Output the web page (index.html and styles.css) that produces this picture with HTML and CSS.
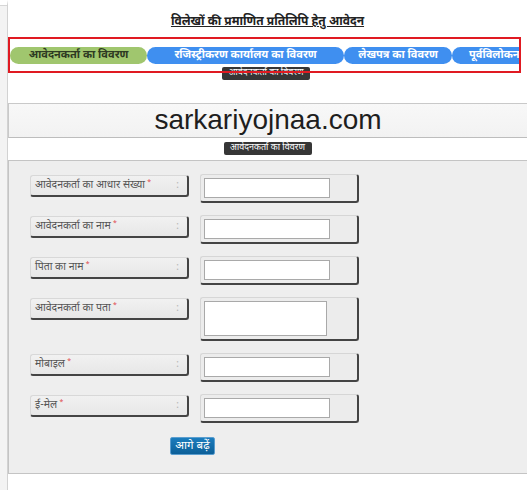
FILE: index.html
```html
<!DOCTYPE html>
<html lang="hi">
<head>
<meta charset="utf-8">
<title>विलेखों की प्रमाणित प्रतिलिपि हेतु आवेदन</title>
<link rel="stylesheet" href="styles.css">
</head>
<body>
<div class="page">
  <div class="gutter"></div>
  <main class="main">
    <h1 class="title">विलेखों की प्रमाणित प्रतिलिपि हेतु आवेदन</h1>
    <div class="steps">
      <div class="tabs">
        <span class="tab tab-active">आवेदनकर्ता का विवरण</span>
        <span class="tab tab-office">रजिस्ट्रीकरण कार्यालय का विवरण</span>
        <span class="tab tab-deed">लेखपत्र का विवरण</span>
        <span class="tab tab-preview">पूर्वविलोकन</span>
      </div>
      <span class="badge badge-tip">आवेदनकर्ता का विवरण</span>
    </div>
    <div class="banner">sarkariyojnaa.com</div>
    <div class="caption"><span class="badge">आवेदनकर्ता का विवरण</span></div>
    <form class="panel">
      <div class="row">
        <label class="label"><span>आवेदनकर्ता का आधार संख्या<sup>*</sup></span><span class="colon">:</span></label>
        <div class="field"><input class="input" type="text"></div>
      </div>
      <div class="row">
        <label class="label"><span>आवेदनकर्ता का नाम<sup>*</sup></span><span class="colon">:</span></label>
        <div class="field"><input class="input" type="text"></div>
      </div>
      <div class="row">
        <label class="label"><span>पिता का नाम<sup>*</sup></span><span class="colon">:</span></label>
        <div class="field"><input class="input" type="text"></div>
      </div>
      <div class="row">
        <label class="label"><span>आवेदनकर्ता का पता<sup>*</sup></span><span class="colon">:</span></label>
        <div class="field"><textarea class="input area"></textarea></div>
      </div>
      <div class="row">
        <label class="label"><span>मोबाइल<sup>*</sup></span><span class="colon">:</span></label>
        <div class="field"><input class="input" type="text"></div>
      </div>
      <div class="row">
        <label class="label"><span>ई-मेल<sup>*</sup></span><span class="colon">:</span></label>
        <div class="field"><input class="input" type="text"></div>
      </div>
      <div class="actions"><button class="btn" type="button">आगे बढ़ें</button></div>
    </form>
  </main>
</div>
</body>
</html>
```
FILE: styles.css
```css
* { box-sizing: border-box; }
html, body { margin: 0; padding: 0; background: #fff; }
body {
  font-family: "Noto Sans Devanagari", "Lohit Devanagari", "Noto Sans", "Liberation Sans", sans-serif;
  color: #222;
  overflow: hidden;
}
.page { display: flex; min-height: 490px; }
.gutter {
  width: 8px;
  flex: none;
  background: #f3f3f3;
  border-right: 1px solid #d2d2d2;
  border-top: 5px solid #fff;
  box-shadow: inset 0 1px 0 #d6d6d6;
}
.main { flex: 1; padding-top: 12px; min-width: 0; }
.title {
  margin: 0;
  font-size: 12px;
  font-weight: 700;
  line-height: 20px;
  text-align: center;
  text-decoration: underline;
  color: #222;
}
.steps {
  position: relative;
  margin-top: 5px;
  width: 513px;
  padding: 10px 0 9px;
}
.steps::after {
  content: "";
  position: absolute;
  inset: 0;
  border: 2px solid #e01a22;
  z-index: 2;
  pointer-events: none;
}
.tabs {
  display: flex;
  height: 17px;
  margin-left: 2px;
  width: 509px;
  overflow: hidden;
}
.tab {
  flex: none;
  height: 17px;
  line-height: 17px;
  border-radius: 9px;
  background: #3f8ff0;
  color: #fff;
  font-size: 11px;
  font-weight: 700;
  text-align: center;
  white-space: nowrap;
}
.tab-active { width: 137px; background: #a0c66e; color: #2e3a22; }
.tab-office { width: 197px; }
.tab-deed { width: 108px; }
.tab-preview { width: 90px; text-align: left; padding-left: 17px; }
.badge {
  display: inline-block;
  height: 13px;
  line-height: 13px;
  padding: 0 5px;
  background: #363636;
  color: #fff;
  font-size: 9px;
  border-radius: 2px;
  white-space: nowrap;
}
.badge-tip {
  position: absolute;
  left: 214px;
  top: 30px;
  width: 88px;
  text-align: center;
  z-index: 1;
}
.banner {
  margin-top: 30px;
  height: 35px;
  border: 1px solid #c9c9c9;
  border-right: 0;
  border-bottom-color: #bdbdbd;
  background: linear-gradient(#f8f8f8, #f2f2f2);
  font-family: "Liberation Sans", Arial, sans-serif;
  font-size: 28px;
  line-height: 31px;
  text-align: center;
  color: #1e1e1e;
}
.caption {
  margin-top: 2px;
  height: 13px;
  text-align: center;
  line-height: 13px;
}
.caption .badge { width: 88px; text-align: center; padding: 0; }
.panel {
  margin: 7px 0 0;
  background: #eeeeee;
  border: 1px solid #c4c4c4;
  border-right: 0;
  padding: 13px 0 18px 21px;
  display: flex;
  flex-direction: column;
  gap: 12px;
}
.row { display: flex; align-items: flex-start; gap: 11px; }
.label {
  width: 159px;
  height: 22px;
  margin-top: 1px;
  display: flex;
  justify-content: space-between;
  padding: 2px 8px 0 4px;
  background: linear-gradient(#f1f1f1, #e7e7e7);
  border: 1px solid #d8d8d8;
  border-right: 2px solid #444;
  border-bottom: 2px solid #444;
  border-radius: 3px;
  font-size: 10.5px;
  line-height: 16px;
  color: #555;
}
.label sup { color: #e0474c; font-size: 7px; vertical-align: 4px; line-height: 0; margin-left: 2px; }
.colon { color: #b5b5b5; }
.field {
  width: 159px;
  padding: 3px;
  background: #ececec;
  border: 1px solid #d6d6d6;
  border-right: 2px solid #444;
  border-bottom: 2px solid #444;
  border-radius: 3px;
}
.input {
  display: block;
  width: 126px;
  height: 20px;
  margin: 0;
  padding: 0 3px;
  background: #fff;
  border: 1px solid #a9a9a9;
  border-radius: 0;
  font-size: 11px;
}
.area { width: 123px; height: 35px; resize: none; }
.actions { margin-top: 2px; padding-left: 140px; }
.btn {
  display: block;
  width: 45px;
  height: 18px;
  padding: 0;
  background: linear-gradient(#1b7cbd, #0c5f98);
  border: 1px solid #5a9dcf;
  border-radius: 2px;
  color: #fff;
  font-family: inherit;
  font-size: 11.5px;
  line-height: 15px;
}
```
